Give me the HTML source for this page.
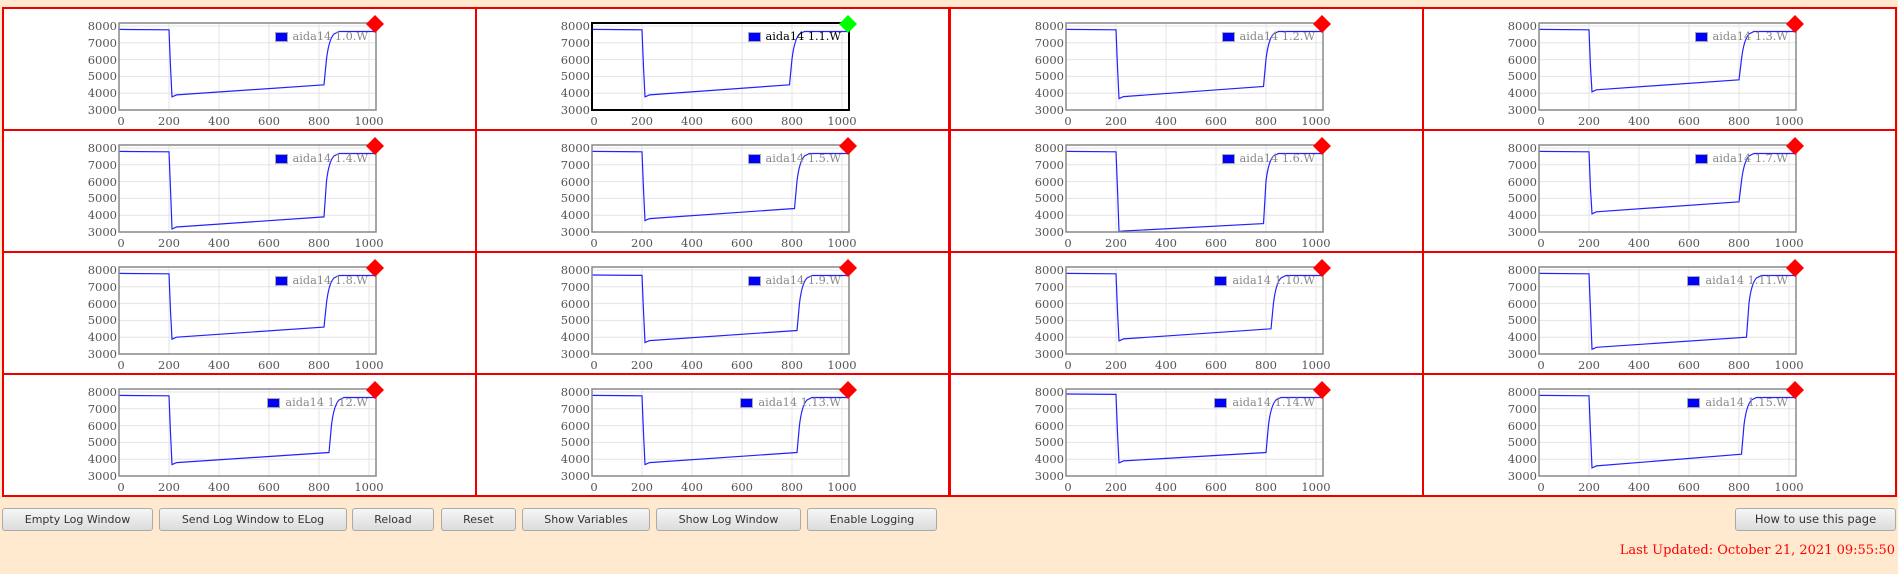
<!DOCTYPE html>
<html><head><meta charset="utf-8"><style>
body{margin:0;width:1898px;height:574px;background:#ffead0;position:relative;overflow:hidden;font-family:"DejaVu Sans","Liberation Sans",sans-serif}
.c{position:absolute;width:475px;height:124px;box-sizing:border-box;border:2px solid #e00;background:#fff}
.c svg{position:absolute;left:-2px;top:-2px}
.g path{stroke:#e4e4e4;stroke-width:1;fill:none}
.d{stroke:#22f;stroke-width:1.2;fill:none}
.f{fill:none;stroke:#888;stroke-width:1.5}
.k{stroke:#000;stroke-width:2}
text{font-family:"DejaVu Serif","Liberation Serif",serif;font-size:11.5px;fill:#555}
.lg{position:absolute;top:21px;right:107px;font:11.3px "DejaVu Serif","Liberation Serif",serif;color:#888;display:flex;align-items:center;white-space:nowrap}
.lg i{display:inline-block;width:11px;height:8px;background:#00f;border:1px solid #aaa;margin-right:5px}
.b{position:absolute;top:508px;height:23px;box-sizing:border-box;border:1px solid #aaa;border-radius:3px;background:linear-gradient(#f6f6f6,#dcdcdc);font-size:11px;color:#333;text-align:center;line-height:21px;white-space:nowrap}
.lu{position:absolute;right:3px;top:543px;font:13px "DejaVu Serif","Liberation Serif",serif;color:#f00}
</style></head><body>

<!-- row 1 -->
<div class="c" style="left:2px;top:7px"><svg width="475" height="124"><g class="g"><path d="M167 16V103M217 16V103M267 16V103M317 16V103M367 16V103M117 86.2H374M117 69.4H374M117 52.6H374M117 35.8H374M117 19H374"/></g><path class="d" d="M117 22.4L167 22.8L168.5 60L170 89.9L174.5 87.9L322 77.8L324.5 52Q327 32 332 27L337 24.5L374 24.5"/><rect class="f" x="117" y="16" width="257" height="87"/><g text-anchor="end"><text x="115" y="107">3000</text><text x="115" y="90">4000</text><text x="115" y="73">5000</text><text x="115" y="57">6000</text><text x="115" y="40">7000</text><text x="115" y="23">8000</text></g><g text-anchor="middle"><text x="119" y="118">0</text><text x="167" y="118">200</text><text x="217" y="118">400</text><text x="267" y="118">600</text><text x="317" y="118">800</text><text x="367" y="118">1000</text></g><path d="M373 8L382 17L373 26L364 17Z" fill="#f00"/></svg><div class="lg"><i></i>aida14 1.0.W</div></div>

<div class="c" style="left:475px;top:7px"><svg width="475" height="124"><g class="g"><path d="M167 16V103M217 16V103M267 16V103M317 16V103M367 16V103M117 86.2H374M117 69.4H374M117 52.6H374M117 35.8H374M117 19H374"/></g><path class="d" d="M117 22.4L167 22.8L168.5 60L170 89.9L174.5 87.9L314.5 77.8L317 52Q319.5 32 324.5 27L329.5 24.5L374 24.5"/><rect class="f k" x="117" y="16" width="257" height="87"/><g text-anchor="end"><text x="115" y="107">3000</text><text x="115" y="90">4000</text><text x="115" y="73">5000</text><text x="115" y="57">6000</text><text x="115" y="40">7000</text><text x="115" y="23">8000</text></g><g text-anchor="middle"><text x="119" y="118">0</text><text x="167" y="118">200</text><text x="217" y="118">400</text><text x="267" y="118">600</text><text x="317" y="118">800</text><text x="367" y="118">1000</text></g><path d="M373 8L382 17L373 26L364 17Z" fill="#0f0"/></svg><div class="lg" style="color:#000"><i></i>aida14 1.1.W</div></div>

<div class="c" style="left:949px;top:7px"><svg width="475" height="124"><g class="g"><path d="M167 16V103M217 16V103M267 16V103M317 16V103M367 16V103M117 86.2H374M117 69.4H374M117 52.6H374M117 35.8H374M117 19H374"/></g><path class="d" d="M117 22.4L167 22.8L168.5 60L170 91.6L174.5 89.6L314.5 79.5L317 52Q319.5 32 324.5 27L329.5 24.5L374 24.5"/><rect class="f" x="117" y="16" width="257" height="87"/><g text-anchor="end"><text x="115" y="107">3000</text><text x="115" y="90">4000</text><text x="115" y="73">5000</text><text x="115" y="57">6000</text><text x="115" y="40">7000</text><text x="115" y="23">8000</text></g><g text-anchor="middle"><text x="119" y="118">0</text><text x="167" y="118">200</text><text x="217" y="118">400</text><text x="267" y="118">600</text><text x="317" y="118">800</text><text x="367" y="118">1000</text></g><path d="M373 8L382 17L373 26L364 17Z" fill="#f00"/></svg><div class="lg"><i></i>aida14 1.2.W</div></div>

<div class="c" style="left:1422px;top:7px"><svg width="475" height="124"><g class="g"><path d="M167 16V103M217 16V103M267 16V103M317 16V103M367 16V103M117 86.2H374M117 69.4H374M117 52.6H374M117 35.8H374M117 19H374"/></g><path class="d" d="M117 22.4L167 22.8L168.5 60L170 84.8L174.5 82.8L317 72.8L319.5 52Q322 32 327 27L332 24.5L374 24.5"/><rect class="f" x="117" y="16" width="257" height="87"/><g text-anchor="end"><text x="115" y="107">3000</text><text x="115" y="90">4000</text><text x="115" y="73">5000</text><text x="115" y="57">6000</text><text x="115" y="40">7000</text><text x="115" y="23">8000</text></g><g text-anchor="middle"><text x="119" y="118">0</text><text x="167" y="118">200</text><text x="217" y="118">400</text><text x="267" y="118">600</text><text x="317" y="118">800</text><text x="367" y="118">1000</text></g><path d="M373 8L382 17L373 26L364 17Z" fill="#f00"/></svg><div class="lg"><i></i>aida14 1.3.W</div></div>

<!-- row 2 -->
<div class="c" style="left:2px;top:129px"><svg width="475" height="124"><g class="g"><path d="M167 16V103M217 16V103M267 16V103M317 16V103M367 16V103M117 86.2H374M117 69.4H374M117 52.6H374M117 35.8H374M117 19H374"/></g><path class="d" d="M117 22.4L167 22.8L168.5 60L170 100L174.5 98L322 87.9L324.5 52Q327 32 332 27L337 24.5L374 24.5"/><rect class="f" x="117" y="16" width="257" height="87"/><g text-anchor="end"><text x="115" y="107">3000</text><text x="115" y="90">4000</text><text x="115" y="73">5000</text><text x="115" y="57">6000</text><text x="115" y="40">7000</text><text x="115" y="23">8000</text></g><g text-anchor="middle"><text x="119" y="118">0</text><text x="167" y="118">200</text><text x="217" y="118">400</text><text x="267" y="118">600</text><text x="317" y="118">800</text><text x="367" y="118">1000</text></g><path d="M373 8L382 17L373 26L364 17Z" fill="#f00"/></svg><div class="lg"><i></i>aida14 1.4.W</div></div>

<div class="c" style="left:475px;top:129px"><svg width="475" height="124"><g class="g"><path d="M167 16V103M217 16V103M267 16V103M317 16V103M367 16V103M117 86.2H374M117 69.4H374M117 52.6H374M117 35.8H374M117 19H374"/></g><path class="d" d="M117 22.4L167 22.8L168.5 60L170 91.6L174.5 89.6L319.5 79.5L322 52Q324.5 32 329.5 27L334.5 24.5L374 24.5"/><rect class="f" x="117" y="16" width="257" height="87"/><g text-anchor="end"><text x="115" y="107">3000</text><text x="115" y="90">4000</text><text x="115" y="73">5000</text><text x="115" y="57">6000</text><text x="115" y="40">7000</text><text x="115" y="23">8000</text></g><g text-anchor="middle"><text x="119" y="118">0</text><text x="167" y="118">200</text><text x="217" y="118">400</text><text x="267" y="118">600</text><text x="317" y="118">800</text><text x="367" y="118">1000</text></g><path d="M373 8L382 17L373 26L364 17Z" fill="#f00"/></svg><div class="lg"><i></i>aida14 1.5.W</div></div>

<div class="c" style="left:949px;top:129px"><svg width="475" height="124"><g class="g"><path d="M167 16V103M217 16V103M267 16V103M317 16V103M367 16V103M117 86.2H374M117 69.4H374M117 52.6H374M117 35.8H374M117 19H374"/></g><path class="d" d="M117 22.4L167 22.8L168.5 60L170 102.5L174.5 102L314.5 94.6L317 52Q319.5 32 324.5 27L329.5 24.5L374 24.5"/><rect class="f" x="117" y="16" width="257" height="87"/><g text-anchor="end"><text x="115" y="107">3000</text><text x="115" y="90">4000</text><text x="115" y="73">5000</text><text x="115" y="57">6000</text><text x="115" y="40">7000</text><text x="115" y="23">8000</text></g><g text-anchor="middle"><text x="119" y="118">0</text><text x="167" y="118">200</text><text x="217" y="118">400</text><text x="267" y="118">600</text><text x="317" y="118">800</text><text x="367" y="118">1000</text></g><path d="M373 8L382 17L373 26L364 17Z" fill="#f00"/></svg><div class="lg"><i></i>aida14 1.6.W</div></div>

<div class="c" style="left:1422px;top:129px"><svg width="475" height="124"><g class="g"><path d="M167 16V103M217 16V103M267 16V103M317 16V103M367 16V103M117 86.2H374M117 69.4H374M117 52.6H374M117 35.8H374M117 19H374"/></g><path class="d" d="M117 22.4L167 22.8L168.5 60L170 84.8L174.5 82.8L317 72.8L319.5 52Q322 32 327 27L332 24.5L374 24.5"/><rect class="f" x="117" y="16" width="257" height="87"/><g text-anchor="end"><text x="115" y="107">3000</text><text x="115" y="90">4000</text><text x="115" y="73">5000</text><text x="115" y="57">6000</text><text x="115" y="40">7000</text><text x="115" y="23">8000</text></g><g text-anchor="middle"><text x="119" y="118">0</text><text x="167" y="118">200</text><text x="217" y="118">400</text><text x="267" y="118">600</text><text x="317" y="118">800</text><text x="367" y="118">1000</text></g><path d="M373 8L382 17L373 26L364 17Z" fill="#f00"/></svg><div class="lg"><i></i>aida14 1.7.W</div></div>

<!-- row 3 -->
<div class="c" style="left:2px;top:251px"><svg width="475" height="124"><g class="g"><path d="M167 16V103M217 16V103M267 16V103M317 16V103M367 16V103M117 86.2H374M117 69.4H374M117 52.6H374M117 35.8H374M117 19H374"/></g><path class="d" d="M117 22.4L167 22.8L168.5 60L170 88.2L174.5 86.2L322 76.1L324.5 52Q327 32 332 27L337 24.5L374 24.5"/><rect class="f" x="117" y="16" width="257" height="87"/><g text-anchor="end"><text x="115" y="107">3000</text><text x="115" y="90">4000</text><text x="115" y="73">5000</text><text x="115" y="57">6000</text><text x="115" y="40">7000</text><text x="115" y="23">8000</text></g><g text-anchor="middle"><text x="119" y="118">0</text><text x="167" y="118">200</text><text x="217" y="118">400</text><text x="267" y="118">600</text><text x="317" y="118">800</text><text x="367" y="118">1000</text></g><path d="M373 8L382 17L373 26L364 17Z" fill="#f00"/></svg><div class="lg"><i></i>aida14 1.8.W</div></div>

<div class="c" style="left:475px;top:251px"><svg width="475" height="124"><g class="g"><path d="M167 16V103M217 16V103M267 16V103M317 16V103M367 16V103M117 86.2H374M117 69.4H374M117 52.6H374M117 35.8H374M117 19H374"/></g><path class="d" d="M117 24L167 24.4L168.5 60L170 91.6L174.5 89.6L322 79.5L324.5 52Q327 32 332 27L337 24.5L374 24.5"/><rect class="f" x="117" y="16" width="257" height="87"/><g text-anchor="end"><text x="115" y="107">3000</text><text x="115" y="90">4000</text><text x="115" y="73">5000</text><text x="115" y="57">6000</text><text x="115" y="40">7000</text><text x="115" y="23">8000</text></g><g text-anchor="middle"><text x="119" y="118">0</text><text x="167" y="118">200</text><text x="217" y="118">400</text><text x="267" y="118">600</text><text x="317" y="118">800</text><text x="367" y="118">1000</text></g><path d="M373 8L382 17L373 26L364 17Z" fill="#f00"/></svg><div class="lg"><i></i>aida14 1.9.W</div></div>

<div class="c" style="left:949px;top:251px"><svg width="475" height="124"><g class="g"><path d="M167 16V103M217 16V103M267 16V103M317 16V103M367 16V103M117 86.2H374M117 69.4H374M117 52.6H374M117 35.8H374M117 19H374"/></g><path class="d" d="M117 22.4L167 22.8L168.5 60L170 89.9L174.5 87.9L322 77.8L324.5 52Q327 32 332 27L337 24.5L374 24.5"/><rect class="f" x="117" y="16" width="257" height="87"/><g text-anchor="end"><text x="115" y="107">3000</text><text x="115" y="90">4000</text><text x="115" y="73">5000</text><text x="115" y="57">6000</text><text x="115" y="40">7000</text><text x="115" y="23">8000</text></g><g text-anchor="middle"><text x="119" y="118">0</text><text x="167" y="118">200</text><text x="217" y="118">400</text><text x="267" y="118">600</text><text x="317" y="118">800</text><text x="367" y="118">1000</text></g><path d="M373 8L382 17L373 26L364 17Z" fill="#f00"/></svg><div class="lg"><i></i>aida14 1.10.W</div></div>

<div class="c" style="left:1422px;top:251px"><svg width="475" height="124"><g class="g"><path d="M167 16V103M217 16V103M267 16V103M317 16V103M367 16V103M117 86.2H374M117 69.4H374M117 52.6H374M117 35.8H374M117 19H374"/></g><path class="d" d="M117 22.4L167 22.8L168.5 60L170 98.3L174.5 96.3L324.5 86.2L327 52Q329.5 32 334.5 27L339.5 24.5L374 24.5"/><rect class="f" x="117" y="16" width="257" height="87"/><g text-anchor="end"><text x="115" y="107">3000</text><text x="115" y="90">4000</text><text x="115" y="73">5000</text><text x="115" y="57">6000</text><text x="115" y="40">7000</text><text x="115" y="23">8000</text></g><g text-anchor="middle"><text x="119" y="118">0</text><text x="167" y="118">200</text><text x="217" y="118">400</text><text x="267" y="118">600</text><text x="317" y="118">800</text><text x="367" y="118">1000</text></g><path d="M373 8L382 17L373 26L364 17Z" fill="#f00"/></svg><div class="lg"><i></i>aida14 1.11.W</div></div>

<!-- row 4 -->
<div class="c" style="left:2px;top:373px"><svg width="475" height="124"><g class="g"><path d="M167 16V103M217 16V103M267 16V103M317 16V103M367 16V103M117 86.2H374M117 69.4H374M117 52.6H374M117 35.8H374M117 19H374"/></g><path class="d" d="M117 22.4L167 22.8L168.5 60L170 91.6L174.5 89.6L327 79.5L329.5 52Q332 32 337 27L342 24.5L374 24.5"/><rect class="f" x="117" y="16" width="257" height="87"/><g text-anchor="end"><text x="115" y="107">3000</text><text x="115" y="90">4000</text><text x="115" y="73">5000</text><text x="115" y="57">6000</text><text x="115" y="40">7000</text><text x="115" y="23">8000</text></g><g text-anchor="middle"><text x="119" y="118">0</text><text x="167" y="118">200</text><text x="217" y="118">400</text><text x="267" y="118">600</text><text x="317" y="118">800</text><text x="367" y="118">1000</text></g><path d="M373 8L382 17L373 26L364 17Z" fill="#f00"/></svg><div class="lg"><i></i>aida14 1.12.W</div></div>

<div class="c" style="left:475px;top:373px"><svg width="475" height="124"><g class="g"><path d="M167 16V103M217 16V103M267 16V103M317 16V103M367 16V103M117 86.2H374M117 69.4H374M117 52.6H374M117 35.8H374M117 19H374"/></g><path class="d" d="M117 22.4L167 22.8L168.5 60L170 91.6L174.5 89.6L322 79.5L324.5 52Q327 32 332 27L337 24.5L374 24.5"/><rect class="f" x="117" y="16" width="257" height="87"/><g text-anchor="end"><text x="115" y="107">3000</text><text x="115" y="90">4000</text><text x="115" y="73">5000</text><text x="115" y="57">6000</text><text x="115" y="40">7000</text><text x="115" y="23">8000</text></g><g text-anchor="middle"><text x="119" y="118">0</text><text x="167" y="118">200</text><text x="217" y="118">400</text><text x="267" y="118">600</text><text x="317" y="118">800</text><text x="367" y="118">1000</text></g><path d="M373 8L382 17L373 26L364 17Z" fill="#f00"/></svg><div class="lg"><i></i>aida14 1.13.W</div></div>

<div class="c" style="left:949px;top:373px"><svg width="475" height="124"><g class="g"><path d="M167 16V103M217 16V103M267 16V103M317 16V103M367 16V103M117 86.2H374M117 69.4H374M117 52.6H374M117 35.8H374M117 19H374"/></g><path class="d" d="M117 21L167 21.4L168.5 60L170 89.9L174.5 87.9L317 79.5L319.5 52Q322 32 327 27L332 24.5L374 24.5"/><rect class="f" x="117" y="16" width="257" height="87"/><g text-anchor="end"><text x="115" y="107">3000</text><text x="115" y="90">4000</text><text x="115" y="73">5000</text><text x="115" y="57">6000</text><text x="115" y="40">7000</text><text x="115" y="23">8000</text></g><g text-anchor="middle"><text x="119" y="118">0</text><text x="167" y="118">200</text><text x="217" y="118">400</text><text x="267" y="118">600</text><text x="317" y="118">800</text><text x="367" y="118">1000</text></g><path d="M373 8L382 17L373 26L364 17Z" fill="#f00"/></svg><div class="lg"><i></i>aida14 1.14.W</div></div>

<div class="c" style="left:1422px;top:373px"><svg width="475" height="124"><g class="g"><path d="M167 16V103M217 16V103M267 16V103M317 16V103M367 16V103M117 86.2H374M117 69.4H374M117 52.6H374M117 35.8H374M117 19H374"/></g><path class="d" d="M117 22.4L167 22.8L168.5 60L170 94.9L174.5 92.9L319.5 81.2L322 52Q324.5 32 329.5 27L334.5 24.5L374 24.5"/><rect class="f" x="117" y="16" width="257" height="87"/><g text-anchor="end"><text x="115" y="107">3000</text><text x="115" y="90">4000</text><text x="115" y="73">5000</text><text x="115" y="57">6000</text><text x="115" y="40">7000</text><text x="115" y="23">8000</text></g><g text-anchor="middle"><text x="119" y="118">0</text><text x="167" y="118">200</text><text x="217" y="118">400</text><text x="267" y="118">600</text><text x="317" y="118">800</text><text x="367" y="118">1000</text></g><path d="M373 8L382 17L373 26L364 17Z" fill="#f00"/></svg><div class="lg"><i></i>aida14 1.15.W</div></div>

<div class="b" style="left:2px;width:151px">Empty Log Window</div>
<div class="b" style="left:159px;width:188px">Send Log Window to ELog</div>
<div class="b" style="left:352px;width:82px">Reload</div>
<div class="b" style="left:441px;width:75px">Reset</div>
<div class="b" style="left:522px;width:128px">Show Variables</div>
<div class="b" style="left:656px;width:145px">Show Log Window</div>
<div class="b" style="left:807px;width:130px">Enable Logging</div>
<div class="b" style="left:1735px;width:161px;font-size:11.5px">How to use this page</div>
<div class="lu">Last Updated: October 21, 2021 09:55:50</div>
</body></html>
